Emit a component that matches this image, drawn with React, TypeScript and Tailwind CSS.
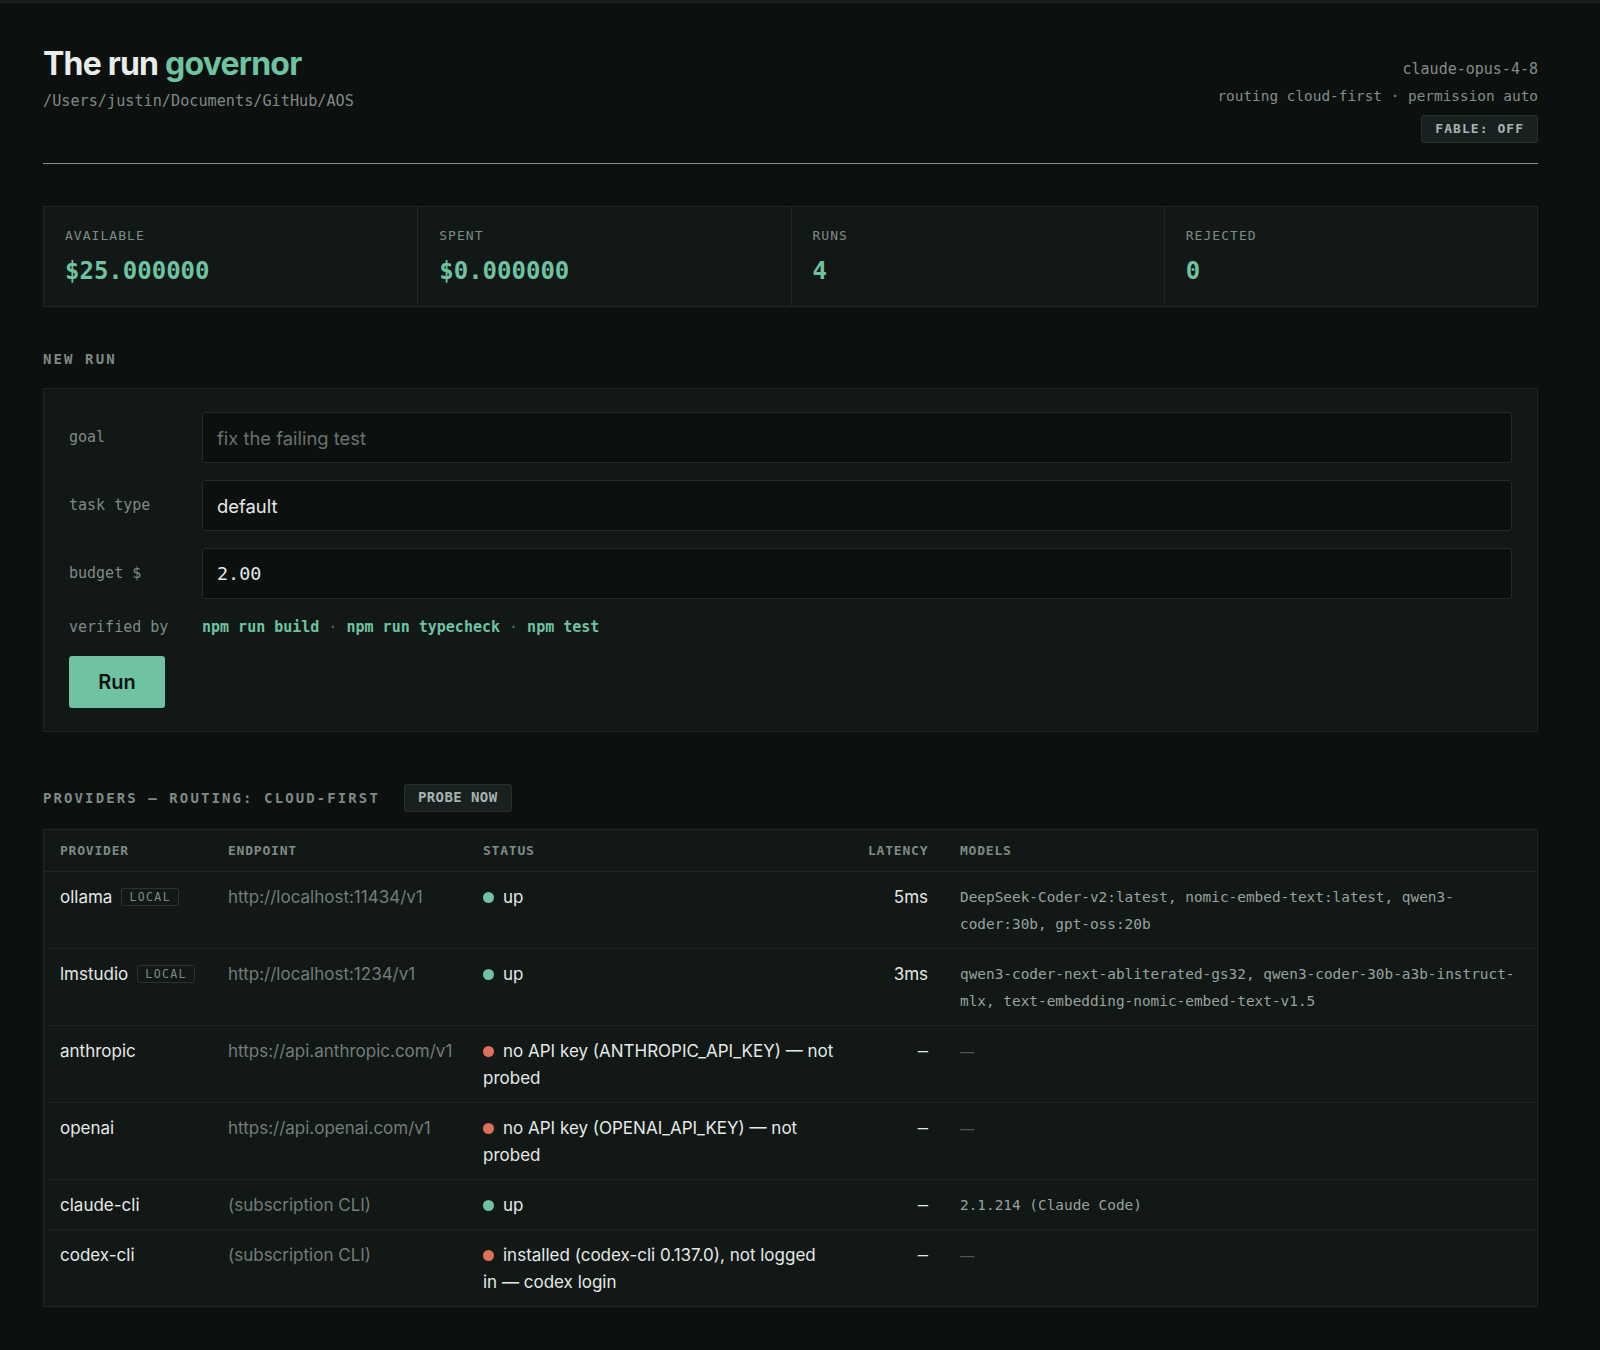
const SANS = { fontFamily: "Inter, 'Noto Sans', sans-serif" };
const MONO = { fontFamily: "'DejaVu Sans Mono', 'Liberation Mono', monospace" };

type Provider = {
  name: string;
  local?: boolean;
  endpoint: string;
  ok: boolean;
  status: string;
  latency: string;
  models: string;
};

const stats = [
  { label: "AVAILABLE", value: "$25.000000" },
  { label: "SPENT", value: "$0.000000" },
  { label: "RUNS", value: "4" },
  { label: "REJECTED", value: "0" },
];

const providers: Provider[] = [
  {
    name: "ollama",
    local: true,
    endpoint: "http://localhost:11434/v1",
    ok: true,
    status: "up",
    latency: "5ms",
    models: "DeepSeek-Coder-v2:latest, nomic-embed-text:latest, qwen3-coder:30b, gpt-oss:20b",
  },
  {
    name: "lmstudio",
    local: true,
    endpoint: "http://localhost:1234/v1",
    ok: true,
    status: "up",
    latency: "3ms",
    models: "qwen3-coder-next-abliterated-gs32, qwen3-coder-30b-a3b-instruct-mlx, text-embedding-nomic-embed-text-v1.5",
  },
  {
    name: "anthropic",
    endpoint: "https://api.anthropic.com/v1",
    ok: false,
    status: "no API key (ANTHROPIC_API_KEY) — not probed",
    latency: "",
    models: "",
  },
  {
    name: "openai",
    endpoint: "https://api.openai.com/v1",
    ok: false,
    status: "no API key (OPENAI_API_KEY) — not probed",
    latency: "",
    models: "",
  },
  {
    name: "claude-cli",
    endpoint: "(subscription CLI)",
    ok: true,
    status: "up",
    latency: "",
    models: "2.1.214 (Claude Code)",
  },
  {
    name: "codex-cli",
    endpoint: "(subscription CLI)",
    ok: false,
    status: "installed (codex-cli 0.137.0), not logged\nin — codex login",
    latency: "",
    models: "",
  },
];

function FormRow({ label, children }: { label: string; children: React.ReactNode }) {
  return (
    <div className="grid grid-cols-[133px_1fr] items-center">
      <span className="text-[15px] text-[#7f8a86]" style={MONO}>
        {label}
      </span>
      {children}
    </div>
  );
}

export default function App() {
  return (
    <div className="min-h-screen bg-[#0c1110] border-t-[3px] border-[#1a201f] text-[#e4e9e7]" style={SANS}>
      <div className="ml-[43px] w-[1495px] pt-[43px] pb-[43px]">
        {/* Header */}
        <header className="flex justify-between items-start pb-[20px] border-b border-[#8a928f]">
          <div>
            <h1 className="text-[32px] leading-[36px] font-bold tracking-[-0.025em] text-[#e8ecea]">
              The run <span className="text-[#6fc3a1]">governor</span>
            </h1>
            <p className="mt-[8px] text-[15.2px] leading-[22px] text-[#7f8985]" style={MONO}>
              /Users/justin/Documents/GitHub/AOS
            </p>
          </div>
          <div className="flex flex-col items-end pt-[10px]">
            <p className="text-[15px] leading-[27px] text-[#838d89]" style={MONO}>
              claude-opus-4-8
            </p>
            <p className="text-[14.4px] leading-[27px] text-[#838d89]" style={MONO}>
              routing cloud-first · permission auto
            </p>
            <span
              className="mt-[5px] h-[28px] px-[13px] flex items-center rounded-[3px] bg-[#182120] border border-[#262f2d] text-[13px] font-bold tracking-[0.08em] text-[#a9b2ae]"
              style={MONO}
            >
              FABLE: OFF
            </span>
          </div>
        </header>

        {/* Stats */}
        <div className="mt-[42px] grid grid-cols-4 bg-[#111816] border border-[#1f2725]">
          {stats.map((s, i) => (
            <div key={s.label} className={`px-[21px] pt-[21px] pb-[19px] ${i > 0 ? "border-l border-[#1f2725]" : ""}`}>
              <p className="text-[13px] leading-[16px] tracking-[0.08em] text-[#7f8a86]" style={MONO}>
                {s.label}
              </p>
              <p className="mt-[11px] text-[24px] leading-[32px] font-bold text-[#6fc3a1]" style={MONO}>
                {s.value}
              </p>
            </div>
          ))}
        </div>

        {/* New run */}
        <h2 className="mt-[43px] text-[14px] leading-[18px] font-bold tracking-[0.15em] text-[#7f8a86]" style={MONO}>
          NEW RUN
        </h2>
        <div className="mt-[20px] bg-[#111816] border border-[#1f2725] px-[25px] py-[23px] flex flex-col gap-[17px]">
          <FormRow label="goal">
            <input
              className="h-[51px] w-full rounded-[3px] bg-[#0c1110] border border-[#232b29] px-[14px] text-[18.4px] text-[#e4e9e7] placeholder:text-[#68726e] outline-none"
              style={SANS}
              placeholder="fix the failing test"
            />
          </FormRow>
          <FormRow label="task type">
            <input
              className="h-[51px] w-full rounded-[3px] bg-[#0c1110] border border-[#232b29] px-[14px] text-[18.4px] text-[#e4e9e7] outline-none"
              style={SANS}
              defaultValue="default"
            />
          </FormRow>
          <FormRow label="budget $">
            <input
              className="h-[51px] w-full rounded-[3px] bg-[#0c1110] border border-[#232b29] px-[14px] text-[18.4px] text-[#e4e9e7] outline-none"
              style={MONO}
              defaultValue="2.00"
            />
          </FormRow>
          <FormRow label="verified by">
            <p className="text-[15px] leading-[22px] font-bold text-[#6fc3a1]" style={MONO}>
              npm run build <span className="font-normal text-[#5d6763]">·</span> npm run typecheck{" "}
              <span className="font-normal text-[#5d6763]">·</span> npm test
            </p>
          </FormRow>
          <div>
            <button className="h-[52px] w-[96px] rounded-[3px] bg-[#6fc3a2] text-[20px] font-semibold text-[#0d1412]">
              Run
            </button>
          </div>
        </div>

        {/* Providers */}
        <div className="mt-[52px] flex items-center gap-[24px]">
          <h2 className="text-[14px] leading-[18px] font-bold tracking-[0.15em] text-[#7f8a86]" style={MONO}>
            PROVIDERS — ROUTING: CLOUD-FIRST
          </h2>
          <button
            className="h-[28px] px-[13px] rounded-[3px] bg-[#182120] border border-[#262f2d] text-[14px] font-bold tracking-[0.03em] text-[#a9b2ae]"
            style={MONO}
          >
            PROBE NOW
          </button>
        </div>

        <div className="mt-[17px] bg-[#111816] border border-[#1f2725]">
          <table className="w-full table-fixed border-collapse text-left">
            <colgroup>
              <col className="w-[168px]" />
              <col className="w-[255px]" />
              <col className="w-[385px]" />
              <col className="w-[92px]" />
              <col />
            </colgroup>
            <thead>
              <tr className="border-b border-[#1f2725]">
                {["PROVIDER", "ENDPOINT", "STATUS", "LATENCY", "MODELS"].map((h) => (
                  <th
                    key={h}
                    className={`px-4 pt-[12px] pb-[12px] text-[13px] leading-[17px] font-bold tracking-[0.06em] text-[#7f8a86] ${
                      h === "LATENCY" ? "text-right" : "text-left"
                    }`}
                    style={MONO}
                  >
                    {h}
                  </th>
                ))}
              </tr>
            </thead>
            <tbody className="text-[17px] leading-[27px]">
              {providers.map((p, i) => (
                <tr key={p.name} className={i < providers.length - 1 ? "border-b border-[#1b2321]" : ""}>
                  <td className="px-4 pt-[12px] pb-[10px] align-top text-[#e4e9e7]">
                    <span>{p.name}</span>
                    {p.local && (
                      <span
                        className="ml-[9px] inline-block align-[2px] px-[7px] leading-[16px] border border-[#2a3331] rounded-[2px] text-[11.5px] tracking-[0.12em] text-[#7f8a86]"
                        style={MONO}
                      >
                        LOCAL
                      </span>
                    )}
                  </td>
                  <td className="px-4 pt-[12px] pb-[10px] align-top text-[#737d79]">{p.endpoint}</td>
                  <td className="pl-4 pr-[14px] pt-[12px] pb-[10px] align-top text-[#e4e9e7] whitespace-pre-line">
                    <span
                      className={`inline-block w-[11px] h-[11px] rounded-full mr-[9px] align-[0px] ${
                        p.ok ? "bg-[#6fc3a2]" : "bg-[#dc705b]"
                      }`}
                    />
                    {p.status}
                  </td>
                  <td className="px-4 pt-[12px] pb-[10px] align-top text-right text-[#e4e9e7]">
                    {p.latency || <span style={MONO}>—</span>}
                  </td>
                  <td
                    className={`px-4 pt-[12px] pb-[10px] align-top text-[14.4px] leading-[27px] ${
                      p.models ? "text-[#98a29e]" : "text-[#4d5653]"
                    }`}
                    style={p.models ? MONO : SANS}
                  >
                    {p.models || "—"}
                  </td>
                </tr>
              ))}
            </tbody>
          </table>
        </div>
      </div>
    </div>
  );
}
